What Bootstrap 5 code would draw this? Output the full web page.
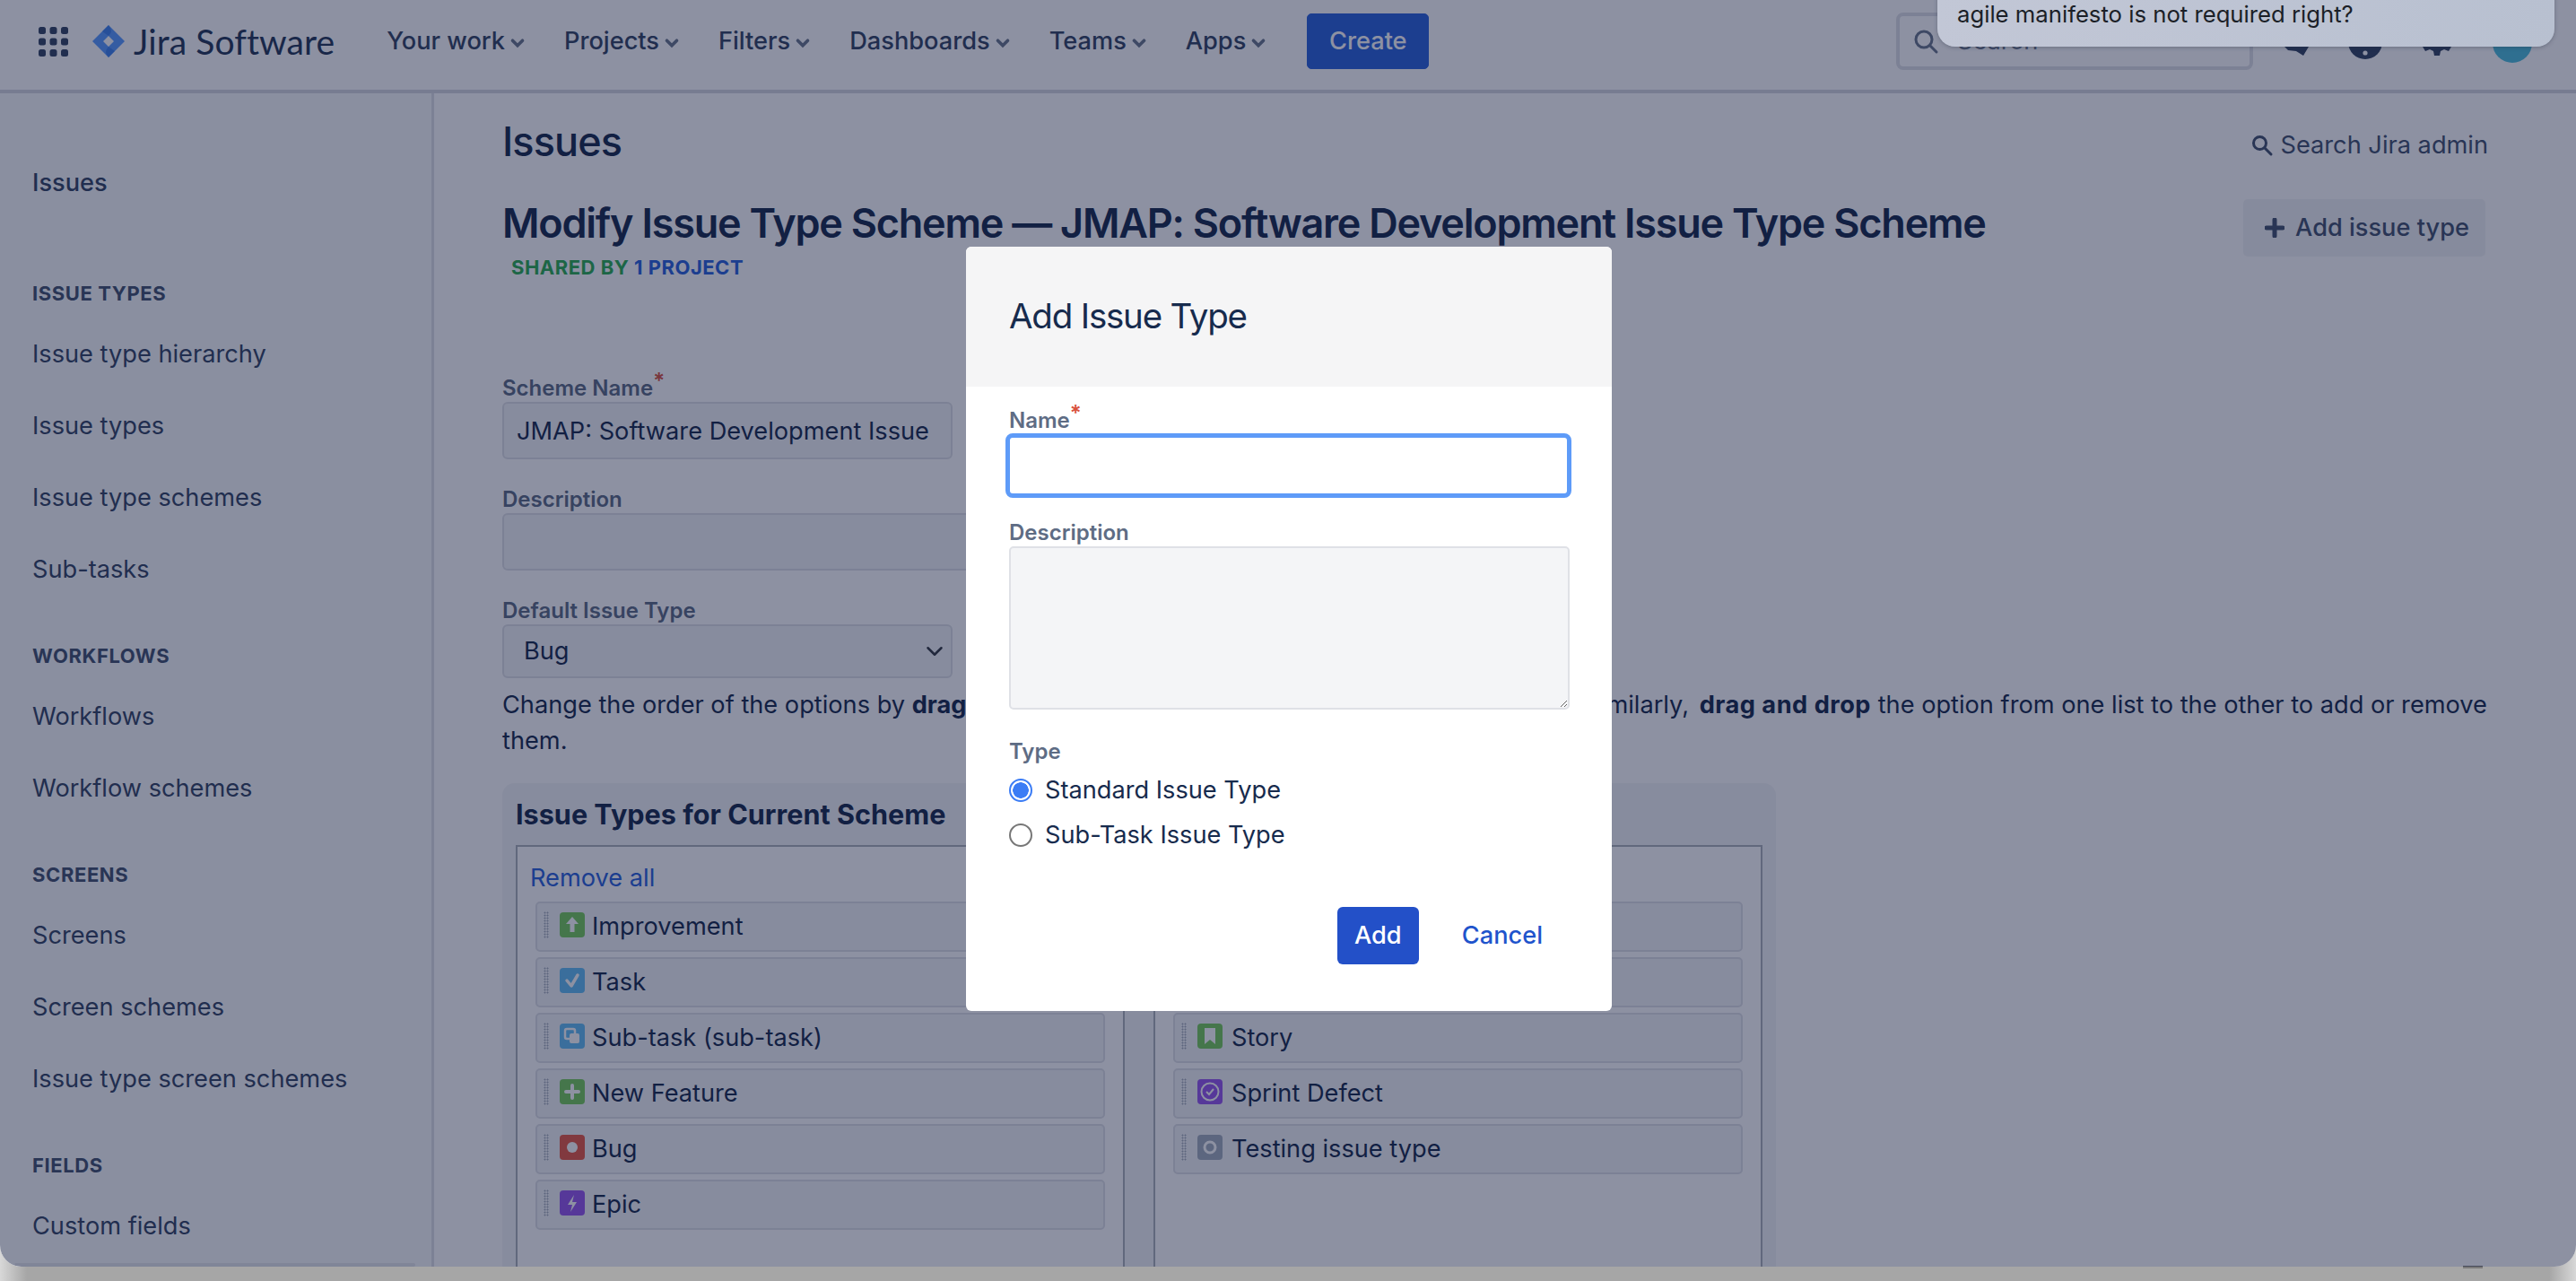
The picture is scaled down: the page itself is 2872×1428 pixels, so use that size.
<!DOCTYPE html>
<html lang="en">
<head>
  <meta charset="UTF-8" />
  <meta name="viewport" content="width=device-width, initial-scale=1" />
  <title>Modify Issue Type Scheme</title>
  <link href="https://cdn.jsdelivr.net/npm/bootstrap@5.3.0/dist/css/bootstrap.min.css" rel="stylesheet" />
  <style>
    html, body { height: 100%; margin: 0; }
    body {
      position: relative;
      font-family: "Inter", "Liberation Sans", sans-serif;
      font-size: 27.2px;
      line-height: 40px;
      color: #172b4d;
      background: linear-gradient(90deg, #d8d8d8 0, #a6a6a6 30px, #a6a6a6 calc(100% - 30px), #d8d8d8 100%);
      overflow: hidden;
    }
    .app-window {
      position: relative;
      height: 1412px;
      background: #fff;
      overflow: hidden;
      border-radius: 0 0 24px 24px;
    }
    .dim-layer {
      position: absolute;
      inset: 0;
      background: rgba(12, 22, 58, 0.47);
      z-index: 10;
    }
    .dock-mark { position: absolute; left: 2746px; top: 1411px; width: 22px; height: 3px; background: #7a7a7a; }

    /* top bar */
    .top-bar {
      height: 104px;
      padding: 0 0 0 43px;
      border-bottom: 4px solid #d5d8df;
      flex-wrap: nowrap;
      align-items: flex-start;
    }
    .top-inner { height: 92px; }
    .app-grid { width: 33px; height: 33px; color: #344563; }
    .brand-mark { width: 36px; height: 36px; margin-left: 27px; }
    .brand-name {
      font-family: "Lato", "Liberation Sans", sans-serif;
      font-size: 39px;
      color: #253858;
      margin-left: 10px;
      margin-right: 58px;
      letter-spacing: .1px;
    }
    .nav-entry {
      font-weight: 500;
      color: #344563;
      margin-right: 41px;
      white-space: nowrap;
    }
    .nav-entry svg { width: 22px; height: 22px; margin-left: 3px; color: #6b778c; }
    .create-btn {
      width: 136px;
      height: 62px;
      margin-left: 2px;
      font-size: 27.2px;
      font-weight: 500;
      line-height: 1;
      background: #2a62dc;
      border-color: #2a62dc;
      border-radius: 5px;
    }
    .search-field {
      position: absolute;
      left: 2114px;
      top: 14px;
      width: 398px;
      height: 64px;
      border: 4px solid #dfe1e6;
      border-radius: 8px;
      color: #6b778c;
      padding-left: 14px;
      background: #fff;
    }
    .search-field svg { width: 30px; height: 30px; margin-right: 20px; }
    .head-icon { position: absolute; color: #344563; }
    .avatar-dot {
      position: absolute;
      left: 2779px;
      top: 26px;
      width: 44px;
      height: 44px;
      border-radius: 50%;
      background: #4fbfde;
    }

    /* notification that sits over the dimmed page */
    .toast-note {
      position: absolute;
      left: 2160px;
      top: -60px;
      width: 688px;
      height: 112px;
      padding: 56px 0 0 22px;
      border-radius: 0 0 20px 20px;
      background: linear-gradient(90deg, #c2c7d6, #b8c0d0);
      color: #1b1f27;
      font-size: 25.7px;
      line-height: 40px;
      z-index: 30;
      box-shadow: 0 1px 4px rgba(40, 50, 70, .35);
    }

    /* sidebar */
    .side-col {
      position: relative;
      width: 484px;
      flex: none;
      border-right: 3px solid #dfe1e6;
      background: #fafbfc;
      padding: 80px 0 0 36px;
      color: #344563;
    }
    .side-top { font-weight: 500; line-height: 40px; margin-bottom: 83px; }
    .side-head {
      font-size: 22px;
      line-height: 40px;
      font-weight: 700;
      letter-spacing: .6px;
      color: #42526e;
      margin-bottom: 28px;
    }
    .side-link { line-height: 40px; margin-bottom: 40px; }
    .side-link.last-of-group { margin-bottom: 56px; }
    .side-scroll { position: absolute; left: 16px; bottom: 0; width: 447px; height: 4px; border-radius: 2px; background: #e6e8ec; }

    /* main */
    .main-col { flex: 1; padding: 34px 0 0 76px; min-width: 0; }
    .admin-search { font-size: 27.2px; color: #42526e; margin-right: 98px; margin-top: 4px; }
    .admin-search svg { width: 26px; height: 26px; margin-right: 8px; }
    .page-title { font-size: 45px; line-height: 44px; font-weight: 500; letter-spacing: -.9px; margin: -4px 0 0; }
    .scheme-title { font-size: 45px; line-height: 56px; font-weight: 600; letter-spacing: -1.23px; margin: -10px 0 0; white-space: nowrap; }
    .add-type-btn {
      width: 270px;
      height: 64px;
      margin-right: 101px;
      padding: 0 0 0 6px;
      gap: 12px;
      font-size: 27.2px;
      font-weight: 500;
      color: #42526e;
      background: rgba(9, 30, 66, .05);
      border: 0;
      border-radius: 5px;
    }
    .add-type-btn svg { width: 22px; height: 22px; }
    .shared-line { font-size: 22px; line-height: 30px; font-weight: 700; letter-spacing: .5px; margin: -3px 0 0 10px; color: #2cae52; }
    .shared-line span { color: #2a62dc; }
    .field-label {
      display: block;
      font-size: 24px;
      line-height: 30px;
      font-weight: 600;
      color: #5e6c84;
      margin: 0;
    }
    .req-star { color: #d9533f; vertical-align: 8px; font-size: 24px; line-height: 0; }
    .scheme-input, .scheme-select {
      height: 64px;
      width: 502px;
      font-size: 27.2px;
      color: #172b4d;
      background-color: #f4f5f7;
      border: 2px solid #dfe1e6;
      border-radius: 6px;
      padding: 0 22px 0 14px;
    }
    .scheme-input.wide-input { width: 700px; }
    .scheme-select {
      height: 60px;
      padding-left: 22px;
      background-size: 24px 20px;
      background-position: right 6px center;
    }
    .help-text { width: 2240px; margin: 10px 0 27px; }
    .help-text .tail-bold { letter-spacing: .5px; margin-left: 4px; }
    .lists-panel {
      width: 1420px;
      height: 700px;
      padding: 14px 15px 0;
      background: #f4f5f7;
      border-radius: 14px;
    }
    .lists-title { font-size: 30.6px; line-height: 42px; font-weight: 700; margin: 0 0 13px; }
    .list-pair { gap: 32px; }
    .list-box { width: 680px; height: 600px; border: 2px solid #adb1ba; background: #fff; padding: 16px 20px; }
    .list-box.right-box { padding-top: 61px; }
    .remove-all { color: #2a62dc; text-decoration: none; line-height: 40px; margin-left: -6px; display: block; margin-top: -1px; margin-bottom: 6px; }
    .type-row {
      height: 56px;
      margin-bottom: 6px;
      border: 2px solid #dfe1e6;
      border-radius: 5px;
      background: #f4f5f7;
      padding: 0 0 0 7px;
    }
    .grip-dots {
      width: 6px;
      height: 30px;
      margin-right: 12px;
      margin-top: -4px;
      background-image: radial-gradient(circle, #a5adba .9px, transparent 1.1px);
      background-size: 3px 3px;
    }
    .type-icon { width: 28px; height: 28px; margin-right: 10px; margin-top: -4px; flex: none; }
    .left-box .type-icon { margin-right: 8px; }

    /* dialog */
    .dialog-wrap { position: absolute; inset: 0; z-index: 20; padding: 275px 0 0 2px; }
    .dialog-box {
      width: 720px;
      height: 852px;
      margin: 0 auto;
      border: 0;
      border-radius: 6px;
      overflow: hidden;
      background: #fff;
    }
    .dialog-box .modal-header { height: 156px; padding: 0 48px; border: 0; border-radius: 0; background: #f5f5f6; }
    .dialog-title { font-size: 38.5px; line-height: 48px; font-weight: 400; letter-spacing: -1.2px; margin: -2px 0 0; }
    .dialog-box .modal-body { padding: 23px 48px 0; flex: none; }
    .name-input {
      height: 72px;
      width: 631px;
      margin: -1px 0 24px -4px;
      border: 5px solid #5e9bf8;
      border-radius: 8px;
    }
    .name-input:focus { border-color: #5e9bf8; box-shadow: none; }
    .desc-input {
      display: block;
      height: 182px;
      width: 625px;
      background: #f4f5f7;
      border: 2px solid #dfe1e6;
      border-radius: 5px;
      margin-bottom: 32px;
    }
    .type-radio { min-height: 0; padding-left: 40px; margin: 0 0 10px; line-height: 40px; }
    .type-radio .form-check-input {
      width: 26px;
      height: 26px;
      margin: 7px 0 0 -40px;
      border: 2px solid #777;
    }
    .type-radio .form-check-input:checked {
      background-color: #fff;
      border-color: #3b7cf5;
      background-image: radial-gradient(circle, #3b7cf5 0 8.5px, transparent 9px);
    }
    .dialog-actions { margin-top: 50px; }
    .add-btn {
      width: 91px;
      height: 64px;
      padding: 0;
      font-size: 27.2px;
      font-weight: 500;
      background: #2350c8;
      border: 0;
      border-radius: 6px;
    }
    .cancel-link { font-weight: 500; color: #1f54cc; text-decoration: none; margin-left: 48px; margin-right: 77px; }
  </style>
</head>
<body>
  <div class="app-window">

    <!-- Top bar -->
    <nav class="navbar top-bar">
      <div class="top-inner d-flex align-items-center">
        <svg class="app-grid" viewBox="0 0 33 33" fill="currentColor">
          <rect x="0" y="0" width="8" height="8" rx="2.5"/><rect x="12.5" y="0" width="8" height="8" rx="2.5"/><rect x="25" y="0" width="8" height="8" rx="2.5"/>
          <rect x="0" y="12.5" width="8" height="8" rx="2.5"/><rect x="12.5" y="12.5" width="8" height="8" rx="2.5"/><rect x="25" y="12.5" width="8" height="8" rx="2.5"/>
          <rect x="0" y="25" width="8" height="8" rx="2.5"/><rect x="12.5" y="25" width="8" height="8" rx="2.5"/><rect x="25" y="25" width="8" height="8" rx="2.5"/>
        </svg>
        <svg class="brand-mark" viewBox="0 0 36 36">
          <path d="M18 0 L36 18 L18 36 L0 18 Z M18 12 L12 18 L18 24 L24 18 Z" fill="#5a9cff" fill-rule="evenodd"/>
          <path d="M18 0 L11 7 L18 12 Q24 7 18 0 Z" fill="#2a6fe0" opacity=".55"/>
          <path d="M18 24 L25 29 L18 36 Q12 30 18 24 Z" fill="#2a6fe0" opacity=".55"/>
        </svg>
        <span class="brand-name">Jira Software</span>
        <span class="nav-entry">Your work<svg viewBox="0 0 24 24" fill="none" stroke="currentColor" stroke-width="4" stroke-linecap="round"><path d="M6 9l6 6 6-6"/></svg></span>
        <span class="nav-entry">Projects<svg viewBox="0 0 24 24" fill="none" stroke="currentColor" stroke-width="4" stroke-linecap="round"><path d="M6 9l6 6 6-6"/></svg></span>
        <span class="nav-entry">Filters<svg viewBox="0 0 24 24" fill="none" stroke="currentColor" stroke-width="4" stroke-linecap="round"><path d="M6 9l6 6 6-6"/></svg></span>
        <span class="nav-entry">Dashboards<svg viewBox="0 0 24 24" fill="none" stroke="currentColor" stroke-width="4" stroke-linecap="round"><path d="M6 9l6 6 6-6"/></svg></span>
        <span class="nav-entry">Teams<svg viewBox="0 0 24 24" fill="none" stroke="currentColor" stroke-width="4" stroke-linecap="round"><path d="M6 9l6 6 6-6"/></svg></span>
        <span class="nav-entry">Apps<svg viewBox="0 0 24 24" fill="none" stroke="currentColor" stroke-width="4" stroke-linecap="round"><path d="M6 9l6 6 6-6"/></svg></span>
        <button class="btn btn-primary create-btn" type="button">Create</button>
      </div>
      <div class="search-field d-flex align-items-center">
        <svg viewBox="0 0 30 30" fill="none" stroke="currentColor" stroke-width="3" stroke-linecap="round"><circle cx="13" cy="13" r="9"/><path d="M20 20l7 7"/></svg>Search
      </div>
      <svg class="head-icon" style="left:2544px;top:30px;width:30px;height:32px" viewBox="0 0 30 32" fill="currentColor"><path d="M3 22h27l-6 10-8-5-9-1z"/></svg>
      <svg class="head-icon" style="left:2618px;top:28px;width:38px;height:38px" viewBox="0 0 38 38"><circle cx="19" cy="19" r="19" fill="currentColor"/><circle cx="19" cy="31" r="2.6" fill="#fff"/></svg>
      <svg class="head-icon" style="left:2701px;top:30px;width:32px;height:32px" viewBox="0 0 32 32"><path fill="currentColor" d="M13 0h6l1 5 4 2 5-2 3 5-4 3v6l4 3-3 5-5-2-4 2-1 5h-6l-1-5-4-2-5 2-3-5 4-3v-6L0 10l3-5 5 2 4-2z"/><circle cx="16" cy="16" r="5" fill="#fff"/></svg>
      <span class="avatar-dot"></span>
    </nav>

    <div class="d-flex" style="height:1308px">
      <!-- Sidebar -->
      <aside class="side-col">
        <div class="side-top">Issues</div>
        <div class="side-head">ISSUE TYPES</div>
        <div class="side-link">Issue type hierarchy</div>
        <div class="side-link">Issue types</div>
        <div class="side-link">Issue type schemes</div>
        <div class="side-link last-of-group">Sub-tasks</div>
        <div class="side-head">WORKFLOWS</div>
        <div class="side-link">Workflows</div>
        <div class="side-link last-of-group">Workflow schemes</div>
        <div class="side-head">SCREENS</div>
        <div class="side-link">Screens</div>
        <div class="side-link">Screen schemes</div>
        <div class="side-link last-of-group">Issue type screen schemes</div>
        <div class="side-head">FIELDS</div>
        <div class="side-link">Custom fields</div>
        <span class="side-scroll"></span>
      </aside>

      <!-- Main -->
      <main class="main-col">
        <div class="d-flex justify-content-between align-items-center" style="margin-bottom:40px">
          <h1 class="page-title">Issues</h1>
          <span class="admin-search d-flex align-items-center">
            <svg viewBox="0 0 26 26" fill="none" stroke="currentColor" stroke-width="3" stroke-linecap="round"><circle cx="10.500" cy="10.500" r="7"/><path d="M16 16l7 7"/></svg>Search Jira admin
          </span>
        </div>
        <div class="d-flex justify-content-between align-items-center">
          <h2 class="scheme-title">Modify Issue Type Scheme — JMAP: Software Development Issue Type Scheme</h2>
          <button class="btn add-type-btn d-flex align-items-center justify-content-center" type="button">
            <svg viewBox="0 0 22 22"><path d="M11 2v18M2 11h18" stroke="currentColor" stroke-width="5" stroke-linecap="round"/></svg>Add issue type
          </button>
        </div>
        <p class="shared-line">SHARED BY <span>1 PROJECT</span></p>

        <label class="field-label" style="margin-top:105px">Scheme Name<span class="req-star">*</span></label>
        <input class="form-control scheme-input" type="text" value="JMAP: Software Development Issue Type Scheme" />
        <label class="field-label" style="margin-top:30px">Description</label>
        <input class="form-control scheme-input wide-input" type="text" />
        <label class="field-label" style="margin-top:30px">Default Issue Type</label>
        <select class="form-select scheme-select"><option>Bug</option></select>
        <p class="help-text">Change the order of the options by <b>dragging and dropping</b> the options into the desired order. Similarly, <b class="tail-bold">drag and drop</b> the option from one list to the other to add or remove them.</p>

        <section class="lists-panel">
          <h3 class="lists-title">Issue Types for Current Scheme</h3>
          <div class="d-flex list-pair">
            <div class="list-box left-box">
              <a class="remove-all" href="#">Remove all</a>
              <div class="type-row d-flex align-items-center"><span class="grip-dots"></span>
                <svg class="type-icon" viewBox="0 0 28 28"><rect width="28" height="28" rx="4" fill="#78cc5c"/><path d="M14 5l7 8h-4.500v9h-5v-9H7z" fill="#fff"/></svg>Improvement</div>
              <div class="type-row d-flex align-items-center"><span class="grip-dots"></span>
                <svg class="type-icon" viewBox="0 0 28 28"><rect width="28" height="28" rx="4" fill="#62bdf3"/><path d="M8 14l5 6 7-12" fill="none" stroke="#fff" stroke-width="3.500" stroke-linecap="round" stroke-linejoin="round"/></svg>Task</div>
              <div class="type-row d-flex align-items-center"><span class="grip-dots"></span>
                <svg class="type-icon" viewBox="0 0 28 28"><rect width="28" height="28" rx="4" fill="#62bdf3"/><rect x="6" y="6" width="11" height="11" rx="2" fill="none" stroke="#fff" stroke-width="2.500"/><rect x="11" y="11" width="11" height="11" rx="2" fill="#fff"/></svg>Sub-task (sub-task)</div>
              <div class="type-row d-flex align-items-center"><span class="grip-dots"></span>
                <svg class="type-icon" viewBox="0 0 28 28"><rect width="28" height="28" rx="4" fill="#78cc5c"/><path d="M14 7v14M7 14h14" stroke="#fff" stroke-width="4" stroke-linecap="round"/></svg>New Feature</div>
              <div class="type-row d-flex align-items-center"><span class="grip-dots"></span>
                <svg class="type-icon" viewBox="0 0 28 28"><rect width="28" height="28" rx="4" fill="#e85a44"/><circle cx="14" cy="14" r="6" fill="#fff"/></svg>Bug</div>
              <div class="type-row d-flex align-items-center"><span class="grip-dots"></span>
                <svg class="type-icon" viewBox="0 0 28 28"><rect width="28" height="28" rx="4" fill="#9858ee"/><path d="M16 5l-7 11h5l-2 8 7-11h-5z" fill="#fff"/></svg>Epic</div>
            </div>
            <div class="list-box right-box">
              <div class="type-row d-flex align-items-center"><span class="grip-dots"></span></div>
              <div class="type-row d-flex align-items-center"><span class="grip-dots"></span></div>
              <div class="type-row d-flex align-items-center"><span class="grip-dots"></span>
                <svg class="type-icon" viewBox="0 0 28 28"><rect width="28" height="28" rx="4" fill="#78cc5c"/><path d="M8 5h12v18l-6-5-6 5z" fill="#fff"/></svg>Story</div>
              <div class="type-row d-flex align-items-center"><span class="grip-dots"></span>
                <svg class="type-icon" viewBox="0 0 28 28"><rect width="28" height="28" rx="4" fill="#9858ee"/><circle cx="14" cy="14" r="9.500" fill="none" stroke="#fff" stroke-width="2"/><path d="M10 14l3 3 5-6" fill="none" stroke="#fff" stroke-width="2"/></svg>Sprint Defect</div>
              <div class="type-row d-flex align-items-center"><span class="grip-dots"></span>
                <svg class="type-icon" viewBox="0 0 28 28"><rect width="28" height="28" rx="4" fill="#a3aebd"/><circle cx="14" cy="14" r="6" fill="none" stroke="#fff" stroke-width="3"/></svg>Testing issue type</div>
            </div>
          </div>
        </section>
      </main>
    </div>

    <div class="dim-layer"></div>

    <!-- Dialog -->
    <div class="dialog-wrap">
      <div class="modal-content dialog-box">
        <div class="modal-header"><h4 class="dialog-title">Add Issue Type</h4></div>
        <div class="modal-body">
          <label class="field-label">Name<span class="req-star">*</span></label>
          <input class="form-control name-input" type="text" />
          <label class="field-label">Description</label>
          <textarea class="form-control desc-input"></textarea>
          <label class="field-label" style="margin-bottom:8px">Type</label>
          <div class="form-check type-radio"><input class="form-check-input" type="radio" name="issue-kind" checked /><label class="form-check-label">Standard Issue Type</label></div>
          <div class="form-check type-radio"><input class="form-check-input" type="radio" name="issue-kind" /><label class="form-check-label">Sub-Task Issue Type</label></div>
        </div>
        <div class="dialog-actions d-flex justify-content-end align-items-center">
          <button class="btn btn-primary add-btn" type="button">Add</button>
          <a class="cancel-link" href="#">Cancel</a>
        </div>
      </div>
    </div>

    <!-- Notification -->
    <div class="toast-note">agile manifesto is not required right?</div>
  </div>
  <span class="dock-mark"></span>

  <script src="https://cdn.jsdelivr.net/npm/bootstrap@5.3.0/dist/js/bootstrap.bundle.min.js"></script>
</body>
</html>
